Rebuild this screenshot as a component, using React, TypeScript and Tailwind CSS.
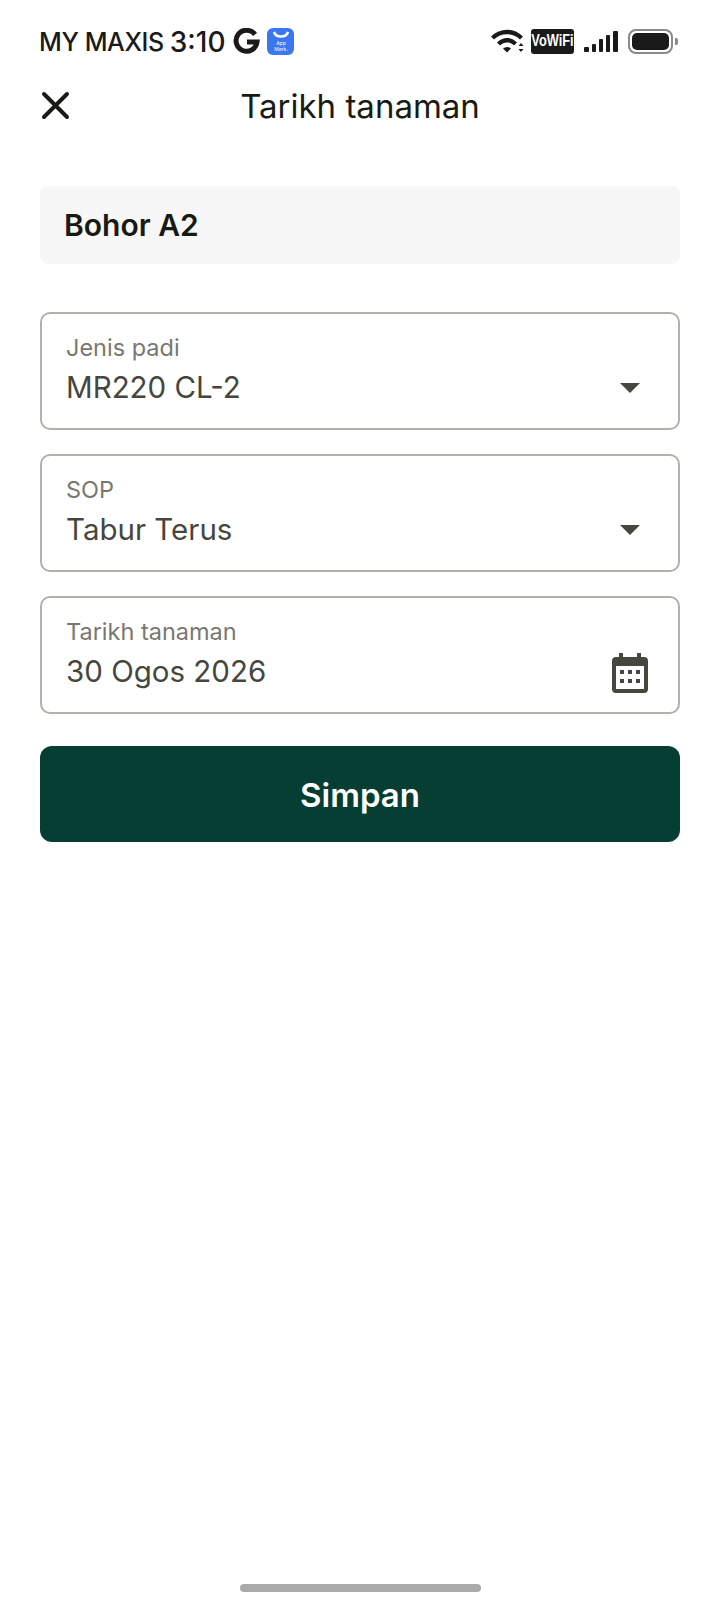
const font = { fontFamily: 'Inter, "Noto Sans", sans-serif' };

const Caret = () => (
	<svg width="20" height="10" viewBox="0 0 20 10" className="mb-[16px] mr-[38px] shrink-0">
		<path d="M0 0h20L10 10z" fill="#45473f" />
	</svg>
);

const CalendarIcon = () => (
	<svg width="36" height="40" viewBox="0 0 36 40" className="mr-[30px] shrink-0">
		<path
			d="M7 0h4v4h14V0h4v4h3a4 4 0 0 1 4 4v28a4 4 0 0 1-4 4H4a4 4 0 0 1-4-4V8a4 4 0 0 1 4-4h3z"
			fill="#45473f"
		/>
		<rect x="4" y="13" width="28" height="23" fill="#fff" />
		<path
			d="M8 17h4v4H8zM16 17h4v4h-4zM24 17h4v4h-4zM8 26h4v4H8zM16 26h4v4h-4zM24 26h4v4h-4z"
			fill="#45473f"
		/>
	</svg>
);

const Field = ({ label, value, icon }: { label: string; value: string; icon: React.ReactNode }) => (
	<div className="flex h-[118px] items-end justify-between rounded-[10px] border-2 border-[#b3b1aa] pb-[19px] pl-[24px]">
		<div>
			<div className="text-[23.500px] leading-[34px] text-[#787870]">{label}</div>
			<div className="text-[29.500px] leading-[44px] text-[#45473f]">{value}</div>
		</div>
		{icon}
	</div>
);

const StatusBar = () => (
	<div className="flex h-[74px] items-start justify-between pl-[39px] pr-[42px] pt-[28px]">
		<div className="flex h-[27px] items-center text-[#1a1a1a]">
			<span className="pt-[2px] text-[25px] font-medium leading-[27px] tracking-[-0.4px]">MY MAXIS</span>
			<span className="ml-[6px] pt-[2px] text-[28px] font-medium leading-[27px]">3:10</span>
			<svg width="27" height="27" viewBox="0 0 27 27" className="ml-[8px]">
				<path d="M22 6.500A10.500 10.500 0 1 0 24 14H14" stroke="#1a1a1a" strokeWidth="5" fill="none" />
			</svg>
			<div className="ml-[7px] flex h-[27px] w-[27px] flex-col items-center rounded-[6px] bg-[#3b77ee]">
				<svg width="16" height="7" viewBox="0 0 16 7" className="mt-[3px]">
					<path d="M1 1c2 6 12 6 14 0" stroke="#fff" strokeWidth="2.500" fill="none" />
				</svg>
				<span className="mt-[2px] text-center text-[5px] leading-[6px] text-white">App<br />Mark.</span>
			</div>
		</div>
		<div className="flex h-[26px] items-center">
			<svg width="34" height="24" viewBox="0 0 34 24">
				<path d="M0 7.500C9-1.500 23-1.500 32 7.500L29 10.500C22 3.500 10 3.500 3 10.500z" fill="#1a1a1a" />
				<path d="M6 13.500C12 7.500 20 7.500 26 13.500L23 16.500C19 12.500 13 12.500 9 16.500z" fill="#1a1a1a" />
				<path d="M12 19.500C14.500 17.500 17.500 17.500 20 19.500L16 23.500z" fill="#1a1a1a" />
				<path d="M30 14l2.500 3h-5zM30 23l2.500-3h-5z" fill="#1a1a1a" />
			</svg>
			<div className="ml-[6px] flex h-[25px] w-[43px] items-center justify-center rounded-[3px] bg-[#1a1a1a] text-white" style={{ fontFamily: '"Liberation Sans", sans-serif' }}>
				<span className="scale-x-[0.8] text-[16px] font-bold leading-none">VoWiFi</span>
			</div>
			<div className="ml-[10px] flex h-[21px] items-end gap-[3px]">
				<div className="h-[5px] w-[5px] rounded-[1px] bg-[#1a1a1a]" />
				<div className="h-[8px] w-[4px] rounded-[1px] bg-[#1a1a1a]" />
				<div className="h-[13px] w-[4px] rounded-[1px] bg-[#1a1a1a]" />
				<div className="h-[17px] w-[4px] rounded-[1px] bg-[#1a1a1a]" />
				<div className="h-[21px] w-[5px] rounded-[1px] bg-[#1a1a1a]" />
			</div>
			<div className="ml-[10px] flex items-center">
				<div className="h-[25px] w-[45px] rounded-[8px] border-2 border-[#8a8a8a] p-[2px]">
					<div className="h-full w-full rounded-[5px] bg-[#1a1a1a]" />
				</div>
				<div className="ml-[2px] h-[7px] w-[3px] rounded-r-[2px] bg-[#8a8a8a]" />
			</div>
		</div>
	</div>
);

export default function App() {
	return (
		<div className="flex h-[1610px] w-[720px] flex-col overflow-hidden bg-white" style={font}>
			<StatusBar />
			<div className="relative flex h-[64px] items-center justify-center">
				<svg width="30" height="30" viewBox="0 0 30 30" className="absolute left-[40px] top-[16px]">
					<path d="M4 4l23 23M27 4L4 27" stroke="#171b14" strokeWidth="4" strokeLinecap="round" />
				</svg>
				<h1 className="pt-[2px] text-[33px] font-normal text-[#171b14]">Tarikh tanaman</h1>
			</div>
			<div className="flex flex-1 flex-col px-[40px] pt-[48px]">
				<div className="flex h-[78px] items-center rounded-[8px] bg-[#f7f7f7] pl-[24px] text-[30px] font-semibold text-[#171b14]">
					Bohor A2
				</div>
				<div className="mt-[48px] flex flex-col gap-[24px]">
					<Field label="Jenis padi" value="MR220 CL-2" icon={<Caret />} />
					<Field label="SOP" value="Tabur Terus" icon={<Caret />} />
					<Field label="Tarikh tanaman" value="30 Ogos 2026" icon={<CalendarIcon />} />
				</div>
				<button className="mt-[32px] h-[96px] rounded-[12px] bg-[#063e34] pt-[3px] text-[33px] font-semibold text-white">
					Simpan
				</button>
			</div>
			<div className="flex justify-center pb-[18px]">
				<div className="h-[8px] w-[241px] rounded-full bg-[#aaaaaa]" />
			</div>
		</div>
	);
}
